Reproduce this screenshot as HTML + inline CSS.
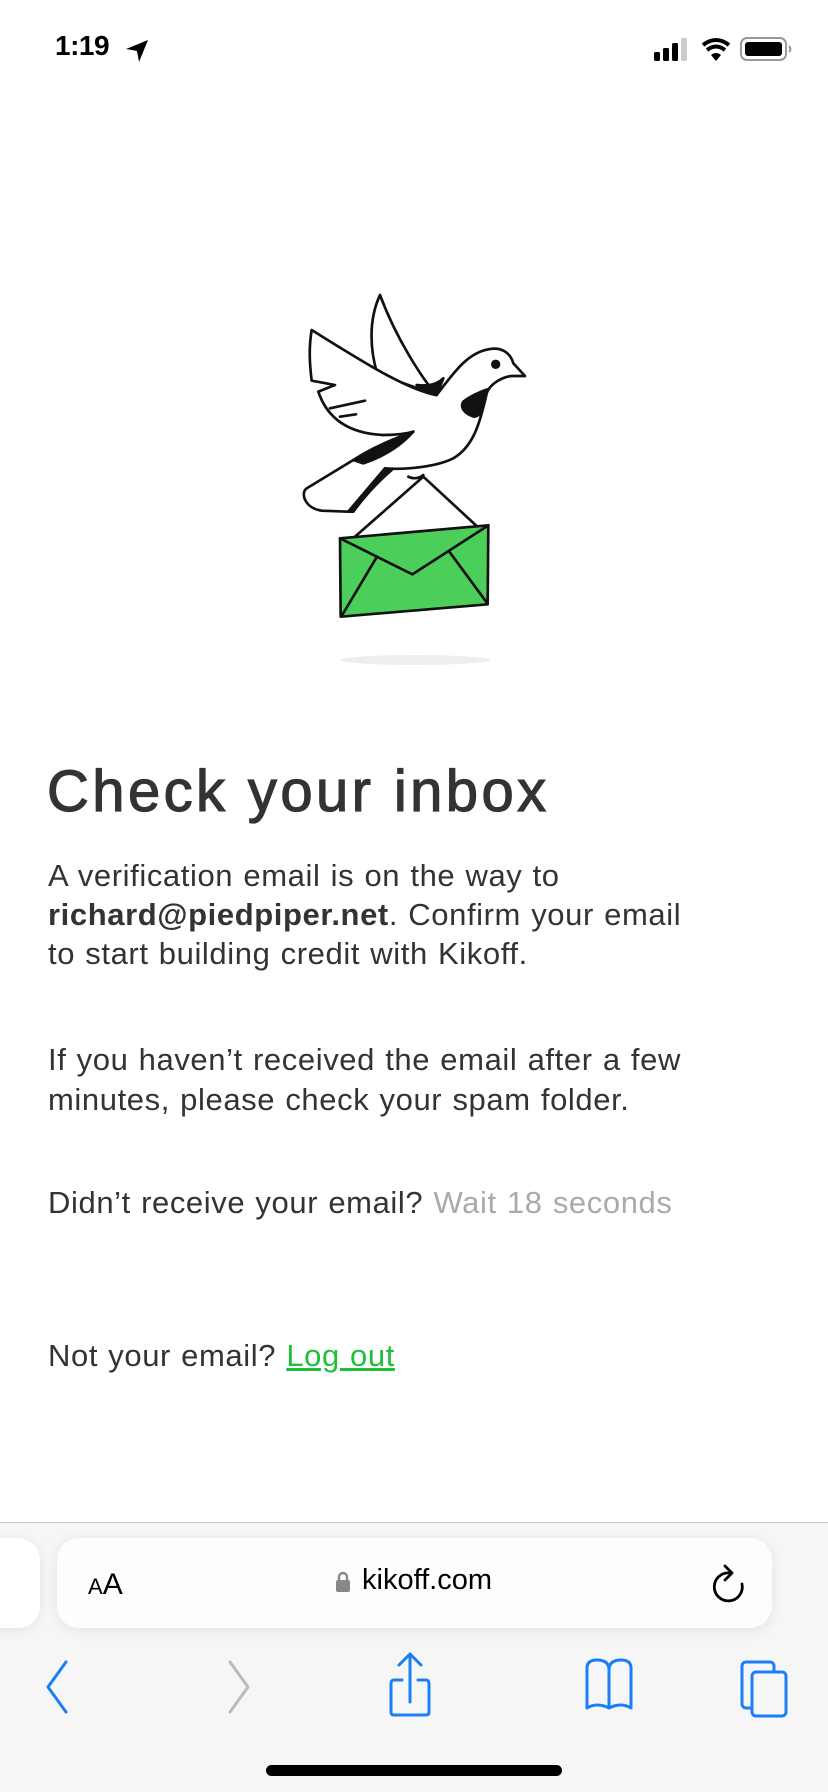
<!DOCTYPE html>
<html><head><meta charset="utf-8">
<style>
*{margin:0;padding:0;box-sizing:border-box}
html,body{width:828px;height:1792px;background:#fff;overflow:hidden;font-family:"Liberation Sans",sans-serif;color:#333}
.abs{position:absolute}
.t{position:absolute;left:48px;font-size:31px;letter-spacing:0.6px;word-spacing:1px;line-height:39px;white-space:nowrap;color:#333}
</style></head><body>
<!-- status bar -->
<div class="abs" style="left:55px;top:30px;font-size:28px;font-weight:bold;color:#000;letter-spacing:-0.5px">1:19</div>
<svg class="abs" style="left:124px;top:38px" width="26" height="26" viewBox="0 0 26 26"><path d="M2 11 L24 2 L15 24 L13 13 Z" fill="#000"/></svg>
<svg class="abs" style="left:650px;top:36px" width="150" height="30" viewBox="0 0 150 30">
<rect x="4" y="16" width="6" height="9" rx="1.5" fill="#000"/><rect x="13" y="12" width="6" height="13" rx="1.5" fill="#000"/><rect x="22" y="7" width="6" height="18" rx="1.5" fill="#000"/><rect x="31" y="2" width="6" height="23" rx="1.5" fill="#ccc"/>
<path d="M53 9 Q66 -1 79 9" stroke="#000" stroke-width="4" fill="none"/><path d="M57 14 Q66 7 75 14" stroke="#000" stroke-width="4" fill="none"/><path d="M61 19 L66 25 L71 19 Q66 15 61 19Z" fill="#000"/>
<rect x="91" y="2" width="45" height="22" rx="6" stroke="#999" stroke-width="2" fill="none"/><rect x="95" y="6" width="37" height="14" rx="3" fill="#000"/><path d="M139 10 q3 3 0 6" stroke="#999" stroke-width="2" fill="none"/>
</svg>
<!-- illustration -->
<svg class="abs" style="left:250px;top:250px" width="300" height="450" viewBox="0 0 900 1350">
<g stroke="#111" stroke-width="8" stroke-linejoin="round" stroke-linecap="round">
<ellipse cx="495" cy="1230" rx="225" ry="15" fill="#eee" stroke="none"/>
<path d="M315 860 L520 680 L680 828" fill="none"/>
<path d="M390 135 C355 210 360 300 382 372 L560 435 C520 390 440 270 390 135Z" fill="#fff"/>
<path d="M185 240 C175 300 180 350 185 392 L255 405 L205 425 C230 500 290 550 400 555 C460 555 490 545 490 545 L440 580 L310 630 L170 715 C150 730 165 775 215 782 L295 785 L405 655 C470 660 560 650 610 625 C670 590 690 520 710 430 C720 400 760 380 785 378 L825 378 L790 340 C780 305 750 290 715 298 C650 310 610 370 560 435 C470 420 330 330 185 240Z" fill="#fff"/>
<path d="M500 405 C540 410 565 400 580 385 L560 435 C530 430 510 420 500 405Z" fill="#111"/>
<path d="M640 455 C660 440 690 425 712 418 C700 480 690 500 672 500 C640 490 630 470 640 455Z" fill="#111"/>
<path d="M310 630 C380 585 450 560 490 545 C450 590 400 620 340 640Z" fill="#111"/>
<path d="M405 655 L295 785 L310 785 C350 730 390 690 425 660Z" fill="#111"/>
<path d="M240 475 L345 452 M270 500 L318 493" fill="none"/>
<path d="M475 680 C490 688 510 685 520 675" fill="none"/>
<circle cx="737" cy="343" r="14" fill="#111" stroke="none"/>
<path d="M270 865 L715 826 L713 1063 L272 1100Z" fill="#4bcf5a"/>
<path d="M270 865 L487 973 L715 826 M378 925 L275 1098 M598 905 L712 1060" fill="none"/>
</g></svg>
<!-- text -->
<div class="abs" style="left:47px;top:758px;font-size:58px;letter-spacing:3.4px;line-height:68px;color:#333;-webkit-text-stroke:1.2px #333;white-space:nowrap">Check your inbox</div>
<div class="t" style="top:856px">A verification email is on the way to</div>
<div class="t" style="top:895px"><b>richard@piedpiper.net</b>. Confirm your email</div>
<div class="t" style="top:934px">to start building credit with Kikoff.</div>
<div class="t" style="top:1040px">If you haven’t received the email after a few</div>
<div class="t" style="top:1080px">minutes, please check your spam folder.</div>
<div class="t" style="top:1183px">Didn’t receive your email? <span style="color:#aaa">Wait 18 seconds</span></div>
<div class="t" style="top:1336px">Not your email? <span style="color:#1fbf3a;text-decoration:underline">Log out</span></div>
<!-- toolbar -->
<div class="abs" style="left:0;top:1522px;width:828px;height:270px;background:#f6f6f6;border-top:1.5px solid #c8c8c8"></div>
<div class="abs" style="left:-20px;top:1538px;width:60px;height:90px;background:#fff;border-radius:22px;box-shadow:0 2px 12px rgba(0,0,0,.08)"></div>
<div class="abs" style="left:57px;top:1538px;width:715px;height:90px;background:#fdfdfd;border-radius:22px;box-shadow:0 2px 14px rgba(0,0,0,.08)"></div>
<div class="abs" style="left:88px;top:1568px;color:#000;white-space:nowrap"><span style="font-size:22px">A</span><span style="font-size:30px">A</span></div>
<svg class="abs" style="left:335px;top:1571px" width="16" height="22" viewBox="0 0 16 22"><path d="M4 10 V6 a4 4 0 0 1 8 0 V10" stroke="#888" stroke-width="2.4" fill="none"/><rect x="1" y="9" width="14" height="12" rx="2" fill="#888"/></svg>
<div class="abs" style="left:362px;top:1564px;font-size:29px;color:#000">kikoff.com</div>
<svg class="abs" style="left:690px;top:1550px" width="70" height="70" viewBox="0 0 70 70"><g stroke="#000" stroke-width="2.8" fill="none" stroke-linecap="round" stroke-linejoin="round"><path d="M40 23 A14 14 0 1 0 52 34"/><path d="M35 16 L42 23 L35 30"/></g></svg>
<svg class="abs" style="left:40px;top:1650px" width="760" height="70" viewBox="0 0 760 70">
<g fill="none" stroke-width="3" stroke-linecap="round" stroke-linejoin="round">
<path d="M26 12 L8 37 L26 62" stroke="#1a7ef5"/>
<path d="M190 12 L208 37 L190 62" stroke="#bbb"/>
<path d="M370 5 V52 M359 15 L370 4 L381 15 M362 30 H354 q-3 0 -3 4 V62 q0 3 3 3 H386 q3 0 3 -3 V34 q0 -4 -3 -4 H378" stroke="#1a7ef5"/>
<path d="M547 58 V18 q0-8 10-8 q12 0 12 10 q0-10 12-10 q10 0 10 8 V58 q-10-6 -22 0 q-12-6 -22 0Z M569 20 V58" stroke="#1a7ef5"/>
<rect x="702" y="12" width="32" height="46" rx="4" stroke="#1a7ef5"/>
<rect x="712" y="22" width="34" height="44" rx="4" stroke="#1a7ef5" fill="#f6f6f6"/>
</g></svg>
<div class="abs" style="left:266px;top:1765px;width:296px;height:11px;border-radius:6px;background:#000"></div>
</body></html>
